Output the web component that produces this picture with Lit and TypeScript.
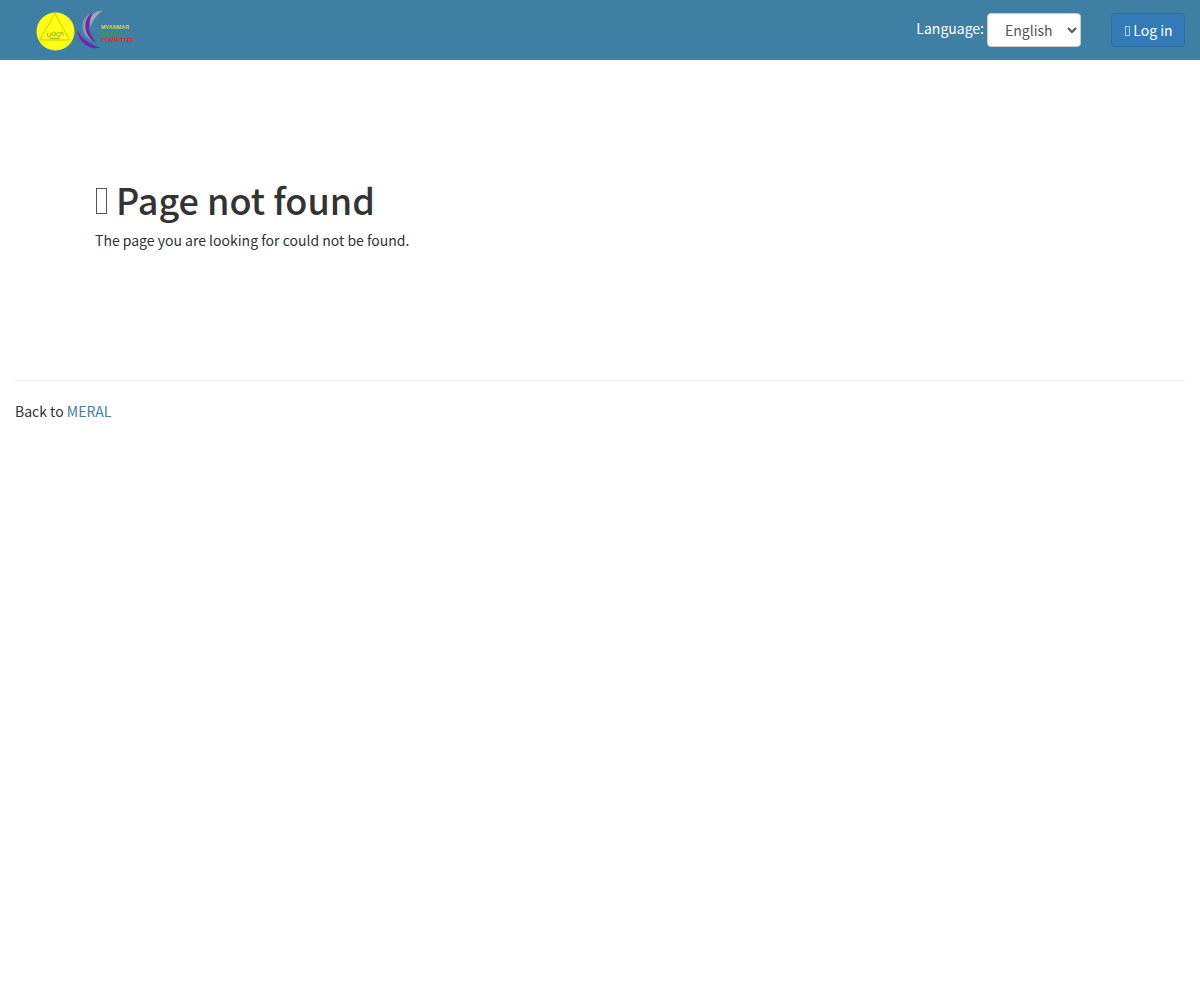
import { LitElement, html, css } from "lit";
import { customElement } from "lit/decorators.js";

@customElement("app-root")
export class AppRoot extends LitElement {
  static styles = css`
    :host {
      display: block;
      font-family: "Noto Sans CJK SC", "Noto Sans", sans-serif;
      font-size: 14px;
      line-height: 20px;
      color: #333;
      background: #fff;
      min-height: 1000px;
    }
    .nav {
      height: 60px;
      background: #3f7fa3;
      display: flex;
      align-items: center;
      padding: 0 15px 0 35px;
      box-sizing: border-box;
    }
    .logo { display: block; width: 100px; height: 42px; }
    .spacer { flex: 1; }
    .lang-label { color: #fff; margin-right: 3px; position: relative; top: -2px; }
    select {
      width: 94px;
      height: 34px;
      box-sizing: border-box;
      font: inherit;
      color: #555;
      background: #fff;
      border: 1px solid #ccc;
      border-radius: 4px;
      padding: 0 0 0 13px;
      margin: 0 30px 0 0;
    }
    .login {
      box-sizing: border-box;
      height: 34px;
      width: 74px;
      padding-left: 2px;
      display: flex;
      align-items: center;
      justify-content: center;
      gap: 3px;
      color: #fff;
      background: #337ab7;
      border: 1px solid #2e6da4;
      border-radius: 4px;
      text-decoration: none;
    }
    .tofu-sm {
      display: block;
      box-sizing: border-box;
      width: 5px;
      height: 10px;
      margin-top: 1px;
      border: 1px solid #a9d0f0;
    }
    .main { height: 320px; padding: 117px 95px 0; box-sizing: border-box; }
    h1 {
      margin: 0;
      display: flex;
      align-items: center;
      gap: 9px;
      font-size: 36px;
      line-height: 44px;
      font-weight: 500;
      color: #333;
    }
    .tofu {
      display: block;
      box-sizing: border-box;
      width: 11px;
      height: 26px;
      margin: 3px 0 0 1px;
      border: 1.500px solid #555;
    }
    p { margin: 9px 0 0; }
    hr { margin: 0 15px; border: 0; border-top: 1px solid #eee; }
    .foot { margin: 20px 15px 0; }
    .foot a { color: #3f7fa3; text-decoration: none; }
  `;

  render() {
    return html`
      <div class="nav">
        <svg class="logo" viewBox="35 9 100 42" aria-label="Logo">
          <circle cx="55.500" cy="31.500" r="19" fill="#ffff14" />
          <path d="M55 13.500 L69.500 40 H39.500 Z" fill="none" stroke="#b4b400" stroke-width="0.700" />
          <path d="M47.500 33 v2.500 a1.500 1.500 0 0 0 3 0 v-2 M52 33.500 a1.800 1.800 0 1 0 3.500 0 a1.800 1.800 0 0 0 -3.500 0 M57 33.500 a2 2 0 1 0 3.500 0 a2 2 0 0 0 -3.500 0 M61 33.500 a1 1.500 0 0 1 2 0 v2 M50 38.500 h8 l2 -1" fill="none" stroke="#5f9f30" stroke-width="0.700" />
          <path d="M95 11.500 C86 14 81.500 21 82.500 28 C83 33 86 37 92 41 C88 36 86 31 86.500 25 C87 19 90 15 95 11.500 Z" fill="#8f98a8" />
          <path d="M93 11.500 C87 16 85 22 85.500 28 C86 34 90 39 96 43 C91 36 88.500 31 89 25 C89.500 20 91 15 93 11.500 Z" fill="#7a22b0" />
          <path d="M103 10.500 C97 10.500 92 14 90.500 19 C90 22 90 25 90.500 28 C91.500 22 96 15 103 10.500 Z" fill="#a3abb5" />
          <path d="M77 30 C82 39 91 45 100 47.500 C91 50.500 79 44 77 30 Z" fill="#7a22b0" />
          <text x="101" y="29" font-size="5.500" font-weight="700" fill="#d2d84a" font-family="Liberation Sans">MYANMAR</text>
          <text x="101" y="35" font-size="5.500" font-weight="700" fill="#2c9e3c" font-family="Liberation Sans">MEDICAL</text>
          <text x="101" y="41.500" font-size="5.500" font-weight="700" fill="#e0262c" font-family="Liberation Sans">COMMITTEE</text>
        </svg>
        <div class="spacer"></div>
        <span class="lang-label">Language:</span>
        <select><option>English</option></select>
        <a class="login" href="#"><span class="tofu-sm"></span><span>Log in</span></a>
      </div>
      <div class="main">
        <h1><span class="tofu"></span><span>Page not found</span></h1>
        <p>The page you are looking for could not be found.</p>
      </div>
      <hr />
      <div class="foot">Back to <a href="#">MERAL</a></div>
    `;
  }
}
